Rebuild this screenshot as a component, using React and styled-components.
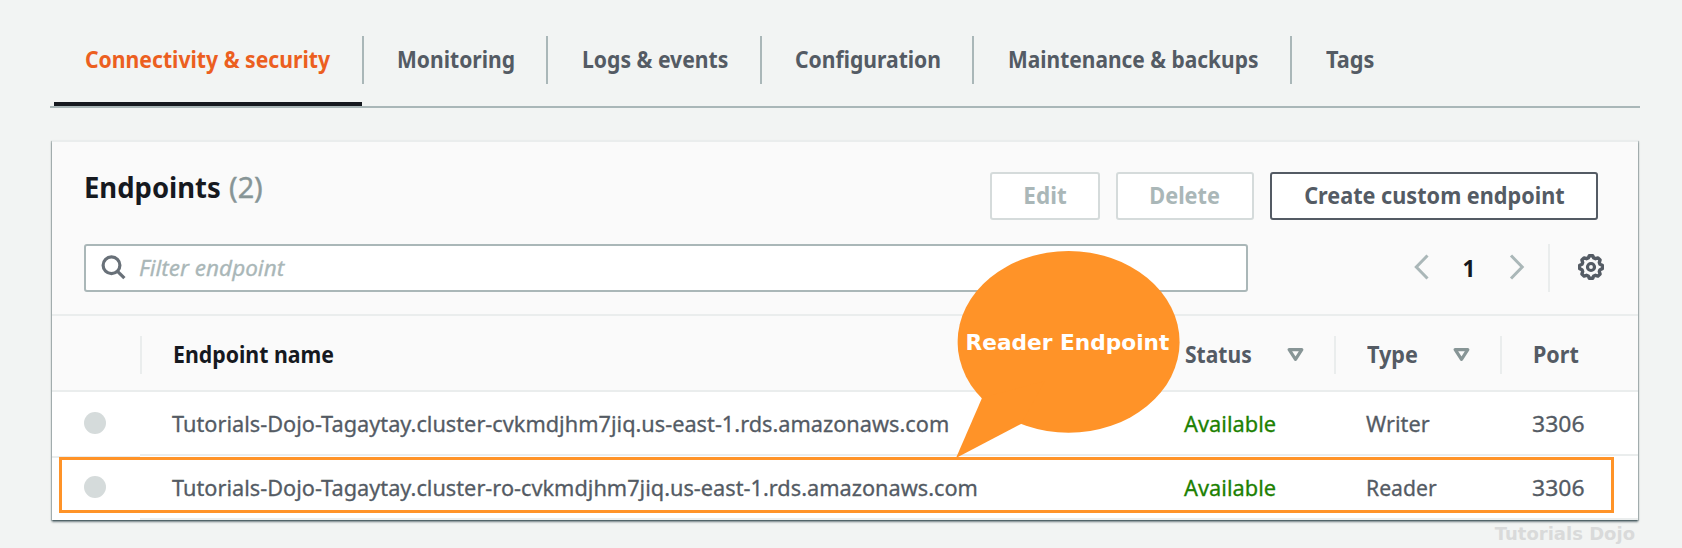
import React from 'react';
import styled, { createGlobalStyle } from 'styled-components';

const Global = createGlobalStyle`
  * { box-sizing: border-box; }
  body { margin: 0; background: #f2f4f3; font-family: "Noto Sans", "Liberation Sans", sans-serif; font-size: 22.5px; color: #545b64; }
`;

const Page = styled.div`
  position: relative;
  width: 1682px;
  height: 548px;
  overflow: hidden;
  padding: 36px 42px 0 50px;
`;

const Tabs = styled.nav`
  display: flex;
  height: 72px;
  padding-left: 4px;
  border-bottom: 2px solid #aab7b8;
`;

const Tab = styled.div`
  flex: none;
  width: ${(p) => p.$w}px;
  padding-left: ${(p) => p.$pad}px;
  height: 70px;
  border-bottom: 4px solid ${(p) => (p.$active ? '#16191f' : 'transparent')};
  color: ${(p) => (p.$active ? '#ec5f1f' : '#545b64')};
  font-weight: 700;
  line-height: 48px;
`;

const TabDivider = styled.div`
  flex: none;
  width: 2px;
  height: 48px;
  background: #aab7b8;
`;

const Label = styled.span`
  display: inline-block;
  white-space: nowrap;
  transform: translateY(${(p) => p.$dy ?? -1}px) scaleX(${(p) => p.$sx || 1});
  transform-origin: ${(p) => (p.$center ? 'center' : 'left')} center;
`;

const Panel = styled.section`
  width: 1586px;
  height: 380px;
  margin: 32px 0 0 2px;
  background: #fff;
  border-top: 2px solid #eaeded;
  box-shadow: 0 2px 2px 0 rgba(0, 28, 36, 0.5), 1px 1px 1px 0 rgba(0, 28, 36, 0.2), -1px 1px 1px 0 rgba(0, 28, 36, 0.2);
`;

const PanelHead = styled.header`
  height: 174px;
  padding: 30px 32px 0 32px;
  background: #fafafa;
  border-bottom: 2px solid #eaeded;
`;

const TitleRow = styled.div`
  display: flex;
  gap: 16px;
  height: 72px;
  padding-right: 8px;
`;

const Title = styled.h2`
  flex: 1;
  margin: 0;
  font-size: 28.5px;
  line-height: 34px;
  color: #16191f;
  span + span { color: #879596; font-weight: 400; margin-left: -4px; -webkit-text-stroke: 0.4px; }
`;

const Button = styled.button`
  width: ${(p) => p.$w}px;
  height: 48px;
  padding: 0;
  border: 2px solid ${(p) => (p.disabled ? '#d5dbdb' : '#545b64')};
  border-radius: 3px;
  background: #fff;
  color: ${(p) => (p.disabled ? '#aab7b8' : '#545b64')};
  font: 700 22.5px/44px "Noto Sans", sans-serif;
`;

const ToolRow = styled.div`
  display: flex;
  align-items: center;
  height: 48px;
`;

const Filter = styled.div`
  flex: none;
  display: flex;
  align-items: center;
  width: 1164px;
  height: 48px;
  padding-left: 15px;
  gap: 12px;
  border: 2px solid #aab7b8;
  border-radius: 3px;
  background: #fff;
  color: #aab7b8;
  font-style: italic;
  -webkit-text-stroke: 0.3px;
`;

const Pager = styled.div`
  flex: none;
  display: flex;
  align-items: center;
  width: 136px;
  margin-left: 164px;
  justify-content: space-between;
  height: 48px;
  padding: 0 23px 2px 1px;
  color: #16191f;
  font-weight: 700;
`;

const Settings = styled.div`
  flex: none;
  display: flex;
  align-items: center;
  height: 48px;
  padding: 0 0 2px 27px;
  border-left: 2px solid #eaeded;
`;

const HeadRow = styled.div`
  display: flex;
  height: 76px;
  padding-top: 20px;
  background: #fafafa;
  border-bottom: 2px solid #eaeded;
  font-weight: 700;
`;

const HeadCell = styled.div`
  flex: none;
  display: flex;
  align-items: center;
  justify-content: space-between;
  width: ${(p) => p.$w}px;
  height: 38px;
  padding: 0 30px 2px 31px;
  border-right: 2px solid ${(p) => (p.$line ? '#eaeded' : 'transparent')};
  color: ${(p) => (p.$dark ? '#16191f' : '#545b64')};
`;

const Row = styled.div`
  display: flex;
  height: 64px;
  background: #fff;
`;

const Cell = styled.div`
  flex: none;
  width: ${(p) => p.$w}px;
  padding-left: 32px;
  line-height: 65px;
  border-bottom: 2px solid #eaeded;
  color: ${(p) => (p.$ok ? '#1d8102' : '#545b64')};
  -webkit-text-stroke: 0.3px;
`;

const RadioCell = styled.div`
  flex: none;
  width: 88px;
  padding: 18px 0 0 32px;
  border-top: 2px solid ${(p) => (p.$line ? '#eaeded' : 'transparent')};
`;

const Radio = styled.div`
  width: 22px;
  height: 22px;
  border-radius: 50%;
  background: #d5dbdb;
`;

const Highlight = styled.div`
  position: absolute;
  left: 59px;
  top: 457px;
  width: 1555px;
  height: 56px;
  border: 3px solid #ff9328;
`;

const Bubble = styled.div`
  position: absolute;
  left: 955px;
  top: 251px;
  width: 226px;
  height: 208px;
  svg { display: block; }
`;

const BubbleText = styled.div`
  position: absolute;
  left: 0;
  right: 1px;
  top: 79px;
  text-align: center;
  color: #fff;
  font: 700 22px/26px "DejaVu Sans", sans-serif;
  white-space: nowrap;
`;

const Watermark = styled.div`
  position: absolute;
  right: 47px;
  top: 522px;
  color: #d9dada;
  font: 700 18px/24px "DejaVu Sans", sans-serif;
  white-space: nowrap;
`;

const tabs = [
  { t: 'Connectivity & security', w: 308, pad: 31, sx: 0.941 },
  { t: 'Monitoring', w: 182, pad: 33, sx: 0.936 },
  { t: 'Logs & events', w: 212, pad: 34, sx: 0.94 },
  { t: 'Configuration', w: 210, pad: 33, sx: 0.938 },
  { t: 'Maintenance & backups', w: 316, pad: 34, sx: 0.931 },
  { t: 'Tags', w: 120, pad: 34, sx: 0.965 },
];

const rows = [
  { name: 'Tutorials-Dojo-Tagaytay.cluster-cvkmdjhm7jiq.us-east-1.rds.amazonaws.com', type: 'Writer', sx: 0.965 },
  { name: 'Tutorials-Dojo-Tagaytay.cluster-ro-cvkmdjhm7jiq.us-east-1.rds.amazonaws.com', type: 'Reader', sx: 0.94 },
];

const SearchIcon = () => (
  <svg width="26" height="26" viewBox="0 0 26 26" fill="none" stroke="#687078" strokeWidth="3.2">
    <circle cx="10.5" cy="10.3" r="8.4" />
    <path d="M16.3 16.1L23.4 23.2" />
  </svg>
);

const Chevron = ({ right }) => (
  <svg width="16" height="26" viewBox="0 0 16 26" fill="none" stroke="#aab7b8" strokeWidth="3">
    <path d={right ? 'M2 1.5L13.2 13L2 24.5' : 'M14.5 1.5L3.3 13L14.5 24.5'} />
  </svg>
);

const Gear = () => (
  <svg width="28" height="28" viewBox="0 0 28 28" fill="none" stroke="#545b64" strokeLinejoin="round">
    <path strokeWidth="3.4" d="M12.3 2.7H15.7L16.7 5L18.5 5.7L21 4.9L23.1 7L22.3 9.5L23 11.3L25.3 12.3V15.7L23 16.7L22.3 18.5L23.1 21L21 23.1L18.5 22.3L16.7 23L15.7 25.3H12.3L11.3 23L9.5 22.3L7 23.1L4.9 21L5.7 18.5L5 16.7L2.7 15.7V12.3L5 11.3L5.7 9.5L4.9 7L7 4.9L9.5 5.7L11.3 5Z" />
    <circle cx="14" cy="14" r="3.5" strokeWidth="3.2" />
  </svg>
);

const SortIcon = () => (
  <svg width="17" height="15" viewBox="0 0 17 15" fill="none" stroke="#879596" strokeWidth="3.2" strokeLinejoin="round">
    <path d="M2.2 2.6H14.8L8.5 12.4Z" />
  </svg>
);

export default function App() {
  return (
    <Page>
      <Global />
      <Tabs>
        {tabs.map((tab, i) => (
          <React.Fragment key={tab.t}>
            {i > 0 && <TabDivider />}
            <Tab $w={tab.w} $pad={tab.pad} $active={i === 0}>
              <Label $sx={tab.sx} $dy={0}>{tab.t}</Label>
            </Tab>
          </React.Fragment>
        ))}
      </Tabs>
      <Panel>
        <PanelHead>
          <TitleRow>
            <Title><Label $sx={0.963} $dy={-2}>Endpoints</Label> <Label $sx={1.01} $dy={-2}>(2)</Label></Title>
            <Button $w={110} disabled><Label $sx={1} $dy={0} $center>Edit</Label></Button>
            <Button $w={138} disabled><Label $sx={0.965} $dy={0} $center>Delete</Label></Button>
            <Button $w={328}><Label $sx={0.962} $dy={0} $center>Create custom endpoint</Label></Button>
          </TitleRow>
          <ToolRow>
            <Filter><SearchIcon /><Label $sx={1}>Filter endpoint</Label></Filter>
            <Pager><Chevron /><Label $dy={1}>1</Label><Chevron right /></Pager>
            <Settings><Gear /></Settings>
          </ToolRow>
        </PanelHead>
        <HeadRow>
          <HeadCell $w={90} $line />
          <HeadCell $w={1012} $dark><Label $sx={0.946} $dy={0}>Endpoint name</Label></HeadCell>
          <HeadCell $w={182} $line><Label $sx={0.935} $dy={0}>Status</Label><SortIcon /></HeadCell>
          <HeadCell $w={166} $line><Label $sx={0.96} $dy={0}>Type</Label><SortIcon /></HeadCell>
          <HeadCell $w={135}><Label $sx={0.957} $dy={0}>Port</Label></HeadCell>
        </HeadRow>
        {rows.map((r, i) => (
          <Row key={r.type}>
            <RadioCell $line={i > 0}><Radio /></RadioCell>
            <Cell $w={1012}><Label $sx={0.966}>{r.name}</Label></Cell>
            <Cell $w={182} $ok><Label $sx={0.97}>Available</Label></Cell>
            <Cell $w={166}><Label $sx={r.sx}>{r.type}</Label></Cell>
            <Cell $w={138}><Label $sx={1.02}>3306</Label></Cell>
          </Row>
        ))}
      </Panel>
      <Highlight />
      <Bubble>
        <svg width="226" height="208" viewBox="0 0 226 208" fill="#ff9328">
          <ellipse cx="113.6" cy="90.9" rx="111" ry="90.8" />
          <path d="M27 147L1 207L66 173L90 130Z" />
        </svg>
        <BubbleText><Label $sx={0.985} $dy={0} $center>Reader Endpoint</Label></BubbleText>
      </Bubble>
      <Watermark><Label $dy={0}>Tutorials Dojo</Label></Watermark>
    </Page>
  );
}
